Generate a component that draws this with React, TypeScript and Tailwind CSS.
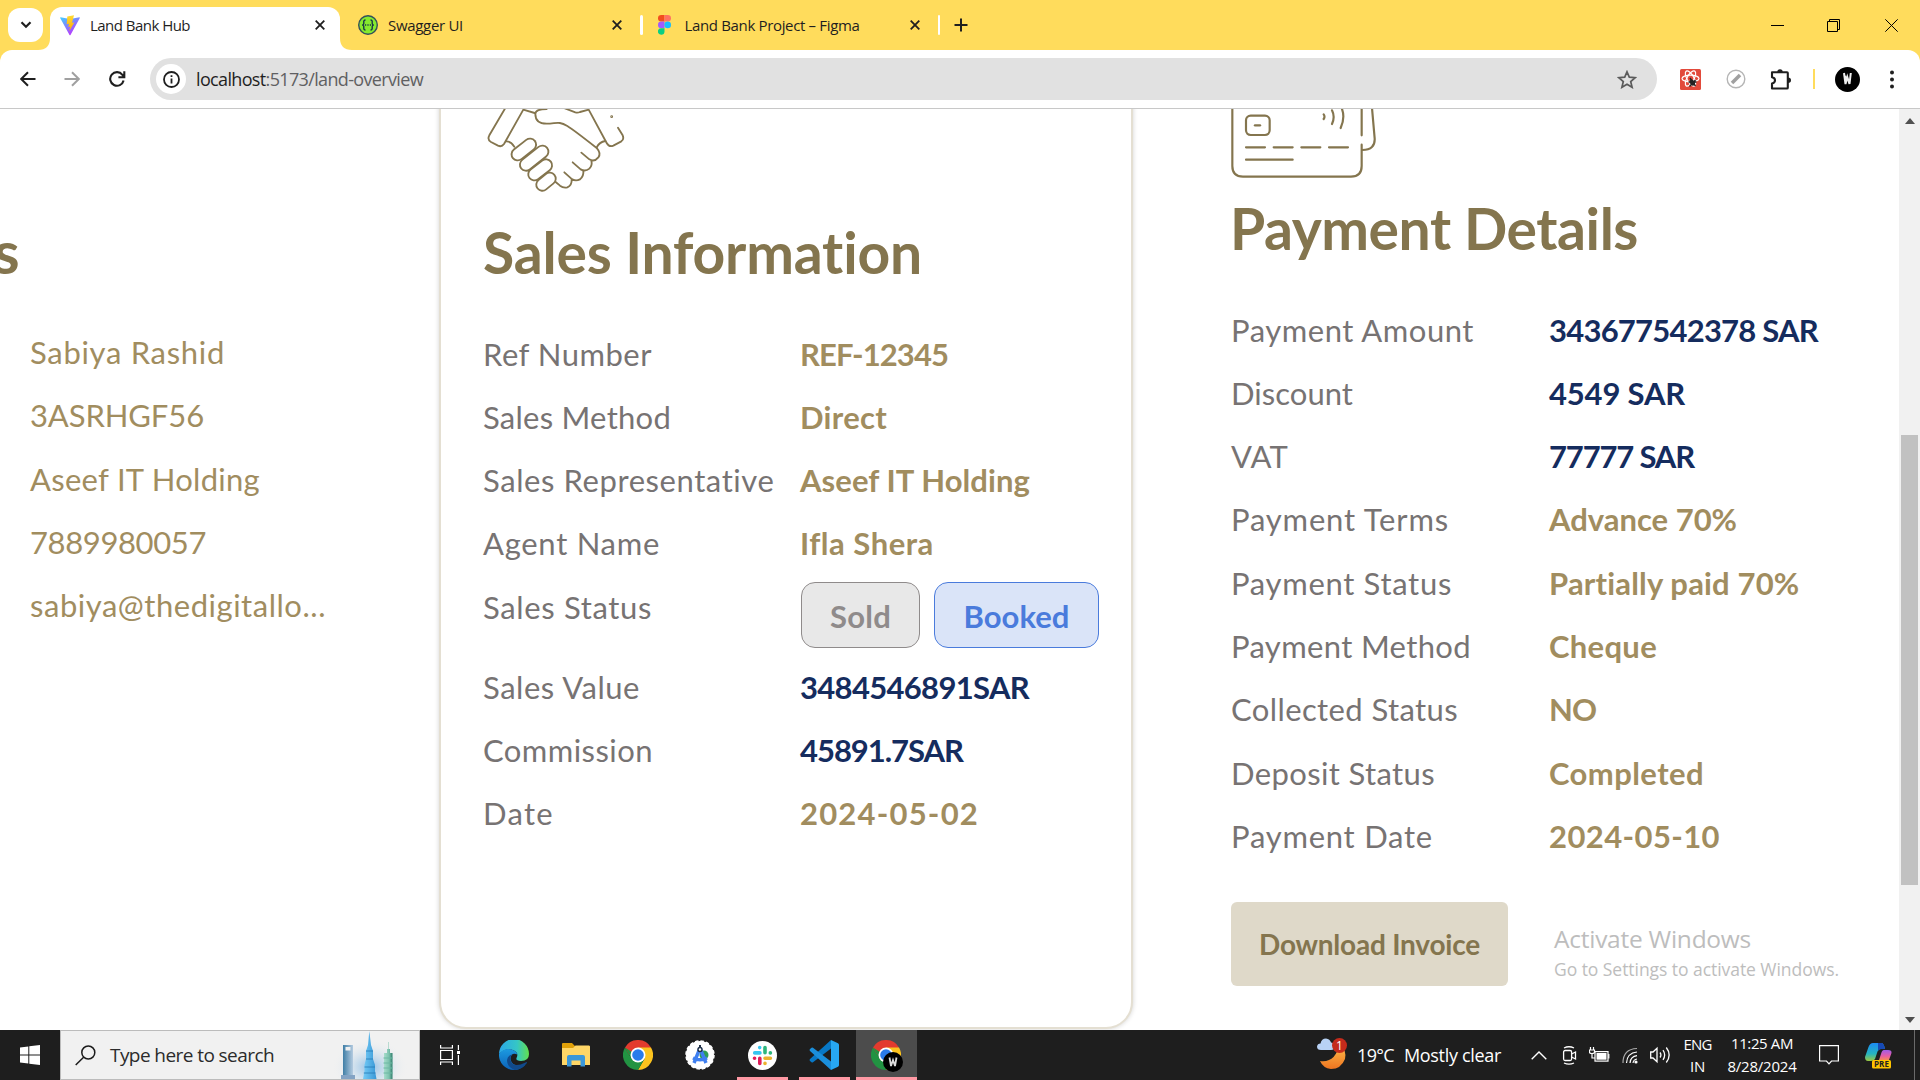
import { useLayoutEffect, useRef } from "react";
import type { ReactNode } from "react";

/* Text tracked so that it fills a given width. */
function Fit({ w, className = "", children }: { w: number; className?: string; children: ReactNode }) {
  const ref = useRef<HTMLSpanElement>(null);
  useLayoutEffect(() => {
    const el = ref.current;
    if (!el) return;
    el.style.letterSpacing = "0px";
    const n = (el.textContent || "x").length;
    const natural = el.getBoundingClientRect().width;
    el.style.letterSpacing = `${(w - natural) / n}px`;
  }, [w]);
  return (
    <span ref={ref} className={"inline-block whitespace-pre " + className}>
      {children}
    </span>
  );
}

const GOLD = "text-[#a18d5f]";
const NAVY = "text-[#152c5e]";

type Cell = [string, number];
type Row = { label: Cell; value: Cell; navy?: boolean };

const owner: Cell[] = [
  ["Sabiya Rashid", 195],
  ["3ASRHGF56", 174],
  ["Aseef IT Holding", 230],
  ["7889980057", 176],
  ["sabiya@thedigitallo...", 296],
];

const salesTop: Row[] = [
  { label: ["Ref Number", 169], value: ["REF-12345", 148] },
  { label: ["Sales Method", 188], value: ["Direct", 87] },
  { label: ["Sales Representative", 292], value: ["Aseef IT Holding", 230] },
  { label: ["Agent Name", 177], value: ["Ifla Shera", 134] },
];
const salesBottom: Row[] = [
  { label: ["Sales Value", 157], value: ["3484546891SAR", 229], navy: true },
  { label: ["Commission", 170], value: ["45891.7SAR", 163], navy: true },
  { label: ["Date", 71], value: ["2024-05-02", 179] },
];
const payment: Row[] = [
  { label: ["Payment Amount", 243], value: ["343677542378 SAR", 269], navy: true },
  { label: ["Discount", 122], value: ["4549 SAR", 136], navy: true },
  { label: ["VAT", 57], value: ["77777 SAR", 145], navy: true },
  { label: ["Payment Terms", 218], value: ["Advance 70%", 188] },
  { label: ["Payment Status", 221], value: ["Partially paid 70%", 251] },
  { label: ["Payment Method", 240], value: ["Cheque", 108] },
  { label: ["Collected Status", 227], value: ["NO", 47] },
  { label: ["Deposit Status", 204], value: ["Completed", 155] },
  { label: ["Payment Date", 202], value: ["2024-05-10", 171] },
];

function InfoRow({ row, labelWidth }: { row: Row; labelWidth: string }) {
  return (
    <div className="flex h-[63.3px] items-start">
      <div className={labelWidth + " shrink-0 text-[#777373]"}>
        <Fit w={row.label[1]}>{row.label[0]}</Fit>
      </div>
      <div className={"font-bold " + (row.navy ? NAVY : GOLD)}>
        <Fit w={row.value[1]}>{row.value[0]}</Fit>
      </div>
    </div>
  );
}

function Handshake() {
  const fingers = ["M263 163 L300 134", "M288 194 L337 155", "M313 223 L348 196", "M337 254 L359 236"];
  return (
    <svg width="150" height="90" viewBox="150 27 450 270" fill="none" stroke="#84754e" strokeWidth="5.5" strokeLinecap="round" strokeLinejoin="round">
      <path d="M226 24 L178 106 Q171 119 183 126 L204 137 Q215 142 222 132 L280 29 L314 39" />
      <path d="M350 27 Q316 27 316 42 Q316 71 350 71 C380 71 385 62 412 78 Q430 89 500 144" />
      <path d="M402 24 L436 37 Q443 39 450 36 L476 29 L530 129 Q537 142 550 137 L574 124 Q583 118 578 106 L564 83" />
      <path d="M228 124 Q242 123 253 140 M500 142 Q508 126 526 123" />
      <circle cx="545" cy="50" r="1.5" />
      {fingers.map((d) => (
        <g key={d}>
          <path d={d} strokeWidth="42" />
          <path d={d} stroke="white" strokeWidth="31" />
        </g>
      ))}
      <path d="M501 145 Q514 160 505 172 Q493 187 478 178 L454 158 M484 182 Q488 196 478 206 Q466 216 452 208 L428 187 M460 211 Q462 228 450 238 Q436 245 424 236 L403 217 M425 238 Q426 256 412 262 Q400 265 390 257 L377 246" />
    </svg>
  );
}

function Cards() {
  return (
    <svg width="150" height="70" viewBox="90 27 450 210" fill="none" stroke="#84754e" strokeWidth="6.5" strokeLinecap="round">
      <path d="M97 20 V198 Q97 230 129 230 H453 Q485 230 485 198 V134 M485 106 V20" />
      <path d="M516 24 L524 115 Q526 150 487 150" />
      <rect x="138" y="47" width="71" height="58" rx="14" />
      <path d="M165 76 H180" strokeWidth="7" />
      <path d="M138 142 H195 M221 142 H278 M304 142 H361 M387 142 H444 M138 179 H278" />
      <path d="M371 43 Q376 50 371 57 M396 31 Q406 51 396 72 M424 22 Q437 51 422 84" />
    </svg>
  );
}

function Close() {
  return (
    <svg width="10" height="10" viewBox="0 0 10 10" stroke="#1f1f1f" strokeWidth="1.8">
      <path d="M.7 .7 L9.3 9.3 M9.3 .7 L.7 9.3" />
    </svg>
  );
}

const TAB_TEXT = "text-[15px] leading-5 text-[#1f1f1f]";

function TabStrip() {
  return (
    <div className="flex h-[50px] items-center bg-[#ffdc5c]">
      <div className="ml-2 flex h-[34px] w-[35px] items-center justify-center rounded-[12px] bg-white">
        <svg width="12" height="8" viewBox="0 0 12 8" fill="none" stroke="#1f1f1f" strokeWidth="2.2">
          <path d="M1.5 1.2 L6 5.7 L10.5 1.2" />
        </svg>
      </div>
      <div className="relative ml-[7px] mt-[7px] flex h-[43px] w-[290px] items-center rounded-t-[12px] bg-white pb-[7px] pl-2.5">
        <svg className="absolute bottom-0 -left-3" width="12" height="12" viewBox="0 0 12 12" fill="white">
          <path d="M12 0 V12 H0 Q12 12 12 0" />
        </svg>
        <svg className="absolute -right-3 bottom-0" width="12" height="12" viewBox="0 0 12 12" fill="white">
          <path d="M0 0 V12 H12 Q0 12 0 0" />
        </svg>
        <svg width="20" height="21" viewBox="0 0 20 21">
          <defs>
            <linearGradient id="vp" x1="0" y1="0" x2="0.6" y2="1">
              <stop offset="0" stopColor="#41d1ff" />
              <stop offset="1" stopColor="#bd34fe" />
            </linearGradient>
            <linearGradient id="vy" x1="0" y1="0" x2="0" y2="1">
              <stop offset="0" stopColor="#ffdc35" />
              <stop offset="1" stopColor="#ffa800" />
            </linearGradient>
          </defs>
          <path d="M.5 2.3 L10 4 L19.5 2.3 Q20 2.5 19.7 3.2 L10.5 20 Q10 20.7 9.5 20 L.3 3.2 Q0 2.5 .5 2.3" fill="url(#vp)" />
          <path d="M14 .2 L7.3 1.5 L6.7 9.3 L9 8.8 L8.3 12 L10.2 11.5 L9.2 16.3 L14.3 7.4 L12 7.8 Z" fill="url(#vy)" />
        </svg>
        <Fit w={100} className={"ml-2.5 " + TAB_TEXT}>Land Bank Hub</Fit>
        <div className="ml-auto mr-[15px]"><Close /></div>
      </div>
      <div className="flex w-[282px] items-center pl-[18px]">
        <svg width="20" height="20" viewBox="0 0 20 20">
          <circle cx="10" cy="10" r="9.3" fill="#85ea2d" stroke="#33505a" strokeWidth="1.4" />
          <path d="M7.5 5 Q5.5 5 5.8 7.5 Q6 10 4.2 10 Q6 10 5.8 12.5 Q5.5 15 7.5 15 M12.5 5 Q14.5 5 14.2 7.5 Q14 10 15.8 10 Q14 10 14.2 12.5 Q14.5 15 12.5 15" fill="none" stroke="#173647" strokeWidth="1.4" />
          <path d="M7 10 H8.2 M9.4 10 H10.6 M11.8 10 H13" stroke="#173647" strokeWidth="1.3" />
        </svg>
        <Fit w={75} className={"ml-2.5 " + TAB_TEXT}>Swagger UI</Fit>
      </div>
      <div className="-ml-2.5"><Close /></div>
      <div className="ml-[18px] h-5 w-[2.5px] rounded bg-white" />
      <svg className="ml-[15px]" width="13" height="20" viewBox="0 0 13 20">
        <path d="M6.5 0 H3.3 A3.3 3.3 0 0 0 3.3 6.6 H6.5Z" fill="#f24e1e" />
        <path d="M6.5 0 H9.7 A3.3 3.3 0 0 1 9.7 6.6 H6.5Z" fill="#ff7262" />
        <path d="M6.5 6.6 H3.3 A3.3 3.3 0 0 0 3.3 13.2 H6.5Z" fill="#a259ff" />
        <circle cx="9.7" cy="9.9" r="3.3" fill="#1abcfe" />
        <path d="M6.5 13.2 H3.3 A3.3 3.3 0 1 0 6.5 16.6Z" fill="#0acf83" />
      </svg>
      <Fit w={175} className={"ml-3.5 " + TAB_TEXT}>Land Bank Project – Figma</Fit>
      <div className="ml-[50px]"><Close /></div>
      <div className="ml-[18px] h-5 w-[2.5px] rounded bg-white" />
      <svg className="ml-[14px]" width="14" height="14" viewBox="0 0 14 14" stroke="#1f1f1f" strokeWidth="2">
        <path d="M7 .5 V13.5 M.5 7 H13.5" />
      </svg>
      <div className="ml-auto mr-[22px] flex items-center">
        <svg width="13" height="13" viewBox="0 0 13 13" stroke="#000"><path d="M0 6.5 H13" /></svg>
        <svg className="ml-[43px]" width="13" height="13" viewBox="0 0 13 13" fill="none" stroke="#000">
          <path d="M.5 2.5 H10.5 V12.5 H.5Z M2.5 2.5 V.5 H12.5 V10.5 H10.5" />
        </svg>
        <svg className="ml-[45px]" width="13" height="13" viewBox="0 0 13 13" stroke="#000"><path d="M.3 .3 L12.7 12.7 M12.7 .3 L.3 12.7" /></svg>
      </div>
    </div>
  );
}

function Toolbar() {
  return (
    <div className="bg-[#ffdc5c]">
      <div className="flex h-[59px] items-center rounded-t-[12px] border-b border-[#c8c8c8] bg-white">
        <svg className="ml-5" width="16" height="16" viewBox="0 0 16 16" fill="none" stroke="#1f1f1f" strokeWidth="2">
          <path d="M15.5 8 H1.5 M8 1.2 L1.2 8 L8 14.8" />
        </svg>
        <svg className="ml-7" width="16" height="16" viewBox="0 0 16 16" fill="none" stroke="#a0a0a0" strokeWidth="2">
          <path d="M.5 8 H14.5 M8 1.2 L14.8 8 L8 14.8" />
        </svg>
        <svg className="ml-[29px]" width="17" height="16" viewBox="0 0 17 16" fill="none" stroke="#1f1f1f" strokeWidth="2.1">
          <path d="M14.6 9.5 A6.8 6.8 0 1 1 13.4 3.8 L15 5.6 M15.3 .3 V6.2 H9.4" />
        </svg>
        <div className="ml-6 flex h-[42px] w-[1507px] items-center rounded-full bg-[#e1e1e1] pl-[6px] pr-[20px]">
          <div className="flex size-[30px] items-center justify-center rounded-full bg-white">
            <svg width="17" height="17" viewBox="0 0 17 17" fill="none" stroke="#1f1f1f" strokeWidth="1.8">
              <circle cx="8.5" cy="8.5" r="7.5" />
              <path d="M8.5 7.5 V12.5 M8.5 4.3 V6.1" />
            </svg>
          </div>
          <Fit w={227} className="ml-[10px] text-[18px] leading-6 text-[#5f6062]">
            <span className="text-[#1f1f1f]">localhost</span>:5173/land-overview
          </Fit>
          <svg className="ml-auto" width="20" height="19" viewBox="0 0 20 19" fill="none" stroke="#5b5b5b" strokeWidth="1.7">
            <path d="M10 1.8 L12.3 7.2 L18.2 7.7 L13.7 11.5 L15.1 17.3 L10 14.2 L4.9 17.3 L6.3 11.5 L1.8 7.7 L7.7 7.2Z" />
          </svg>
        </div>
        <svg className="ml-[23px]" width="21" height="21" viewBox="0 0 21 21" fill="none" stroke="#fff" strokeWidth="1.2">
          <rect width="21" height="21" rx="1.5" fill="#e24a3b" stroke="none" />
          <ellipse cx="10.5" cy="9.5" rx="8.5" ry="3.4" />
          <ellipse cx="10.5" cy="9.5" rx="8.5" ry="3.4" transform="rotate(60 10.5 9.5)" />
          <ellipse cx="10.5" cy="9.5" rx="8.5" ry="3.4" transform="rotate(120 10.5 9.5)" />
          <path d="M10 9 L15.5 17 M8.5 13 H16.5 M9.5 17.5 L15.5 11" stroke="#222" strokeWidth="1.4" />
          <ellipse cx="12.3" cy="13.6" rx="2.3" ry="3.2" fill="#222" stroke="none" transform="rotate(-30 12.3 13.6)" />
        </svg>
        <svg className="ml-[25px]" width="20" height="20" viewBox="0 0 20 20" fill="none">
          <circle cx="10" cy="10" r="8.8" stroke="#b5b5b5" strokeWidth="1.4" />
          <path d="M6 14 L14 6" stroke="#a0a0a0" strokeWidth="3.6" />
        </svg>
        <svg className="ml-[24px]" width="22" height="21" viewBox="0 0 22 21" fill="none" stroke="#1f1f1f" strokeWidth="2.1">
          <path d="M2 3.3 H17 Q17.8 3.3 17.8 4 V18.7 Q17.8 19.5 17 19.5 H2 V14.5 Q5 14 5 11.3 Q5 8.6 2 8.2Z" strokeLinejoin="round" />
          <path d="M7.3 3 Q7.3 .3 10 .3 Q12.7 .3 12.7 3Z M18 8.6 Q21 8.6 21 11.3 Q21 14 18 14Z" fill="#1f1f1f" stroke="none" />
        </svg>
        <div className="ml-[21px] h-5 w-0.5 bg-[#ffdc5c]" />
        <svg className="ml-[20px]" width="25" height="25" viewBox="0 0 25 25">
          <circle cx="12.5" cy="12.5" r="12.5" fill="#000" />
          <path d="M9 6 L10.5 17 L12.3 10 L14.5 17 L15.8 6 M9 8 L12 12" fill="none" stroke="#eee" strokeWidth="2" />
        </svg>
        <svg className="ml-[29px]" width="6" height="19" viewBox="0 0 6 19" fill="#1f1f1f">
          <circle cx="3" cy="2.5" r="2" /><circle cx="3" cy="9.5" r="2" /><circle cx="3" cy="16.5" r="2" />
        </svg>
      </div>
    </div>
  );
}

function Content() {
  return (
    <div className="relative flex h-[921px] overflow-hidden bg-white">
      <div className="flex min-w-0 flex-1 font-['Lato','Liberation_Sans',sans-serif] text-[31px] leading-[40px]">
        <section className="flex w-[439px] shrink-0 flex-col">
          <div className="mt-[108px] flex h-[68px] w-[19.5px] justify-end text-[60px] leading-[68px] font-bold text-[#84754e]">
            <span>s</span>
          </div>
          <div className="mt-[47px] pl-[30px] text-[#a18d5f]">
            {owner.map(([t, w]) => (
              <div key={t} className="h-[63.3px]"><Fit w={w}>{t}</Fit></div>
            ))}
          </div>
        </section>

        <section className="-mt-10 h-[960px] w-[694px] shrink-0 rounded-[27px] border-2 border-[#e4dfd2] bg-white pl-[42px] pt-[38px] shadow-[0_0_5px_rgba(0,0,0,0.18)]">
          <div className="-ml-[3px]"><Handshake /></div>
          <h2 className="mt-[19px] h-[68px] text-[57px] leading-[68px] font-bold text-[#84754e]">
            <Fit w={440}>Sales Information</Fit>
          </h2>
          <div className="mt-[47.6px]">
            {salesTop.map((r) => <InfoRow key={r.label[0]} row={r} labelWidth="w-[317px]" />)}
            <div className="flex h-[79.8px] items-start">
              <div className="w-[318px] shrink-0 text-[#777373]"><Fit w={169}>Sales Status</Fit></div>
              <div className="-mt-[4.6px] flex gap-[14px] font-bold">
                <div className="flex h-[66px] w-[119px] items-center justify-center rounded-[14px] border border-[#8f8b8b] bg-[#e8e8e8] pt-[2px] text-[#8f8b8b]">
                  <Fit w={61}>Sold</Fit>
                </div>
                <div className="flex h-[66px] w-[165px] items-center justify-center rounded-[14px] border border-[#4a7bdc] bg-[#dae4f8] pt-[2px] text-[#4a7bdc]">
                  <Fit w={106}>Booked</Fit>
                </div>
              </div>
            </div>
            {salesBottom.map((r) => <InfoRow key={r.label[0]} row={r} labelWidth="w-[317px]" />)}
          </div>
        </section>

        <section className="ml-[97px] flex w-[669px] shrink-0 flex-col">
          <Cards />
          <h2 className="mt-[15px] h-[68px] text-[57px] leading-[68px] font-bold text-[#84754e]">
            <Fit w={408}>Payment Details</Fit>
          </h2>
          <div className="mt-[47.6px] pl-[1px]">
            {payment.map((r) => <InfoRow key={r.label[0]} row={r} labelWidth="w-[318px]" />)}
          </div>
          <div className="mt-[22.7px] flex items-start pl-[1px]">
            <button className="h-[84px] w-[277px] rounded-[6px] bg-[#dfd9c9] text-[28px] font-bold text-[#84754e]">
              <Fit w={221}>Download Invoice</Fit>
            </button>
            <div className="ml-[46px] mt-[20px] flex flex-col items-start font-['Open_Sans','Noto_Sans',sans-serif] text-[#bdbdbd]">
              <Fit w={197} className="text-[24.5px] leading-[34px]">Activate Windows</Fit>
              <Fit w={285} className="text-[17.5px] leading-[26px]">Go to Settings to activate Windows.</Fit>
            </div>
          </div>
        </section>
      </div>
      <div className="flex w-[21px] shrink-0 flex-col items-center bg-[#f1f1f1]">
        <svg className="mt-[9px]" width="10" height="6" viewBox="0 0 10 6" fill="#505050"><path d="M5 0 L10 6 H0Z" /></svg>
        <div className="mt-[311px] h-[450px] w-[17px] bg-[#c1c1c1]" />
        <svg className="mt-[132px]" width="10" height="6" viewBox="0 0 10 6" fill="#505050"><path d="M5 6 L10 0 H0Z" /></svg>
      </div>
    </div>
  );
}

function Chrome() {
  return (
    <svg width="30" height="30" viewBox="0 0 30 30">
      <path d="M15 15 L2 7.5 A15 15 0 0 1 28 7.5 Z" fill="#e33b2e" />
      <path d="M15 7.5 H28 A15 15 0 0 1 15 30 L21.5 18.8 Z" fill="#fcc31e" />
      <path d="M2 7.5 A15 15 0 0 0 15 30 L21.5 18.8 L8.5 18.8 Z" fill="#229342" />
      <path d="M2 7.5 H15 V15 H6.3Z" fill="#e33b2e" />
      <path d="M2 7.5 L8.5 18.8 L9 12Z" fill="#229342" />
      <circle cx="15" cy="15" r="7.5" fill="#fff" />
      <circle cx="15" cy="15" r="5.8" fill="#2a7bea" />
    </svg>
  );
}

function Taskbar() {
  return (
    <div className="flex h-[50px] items-center bg-[#1e1e1e] text-white">
      <div className="flex w-[60px] justify-center">
        <svg width="20" height="20" viewBox="0 0 20 20" fill="#fff">
          <path d="M0 2.6 L8.3 1.4 V9.5 H0Z M9.3 1.2 L20 0 V9.5 H9.3Z M0 10.5 H8.3 V18.6 L0 17.4Z M9.3 10.5 H20 V20 L9.3 18.8Z" />
        </svg>
      </div>
      <div className="flex h-[50px] w-[360px] items-center border border-[#bcbcbc] bg-[#f1f1f1] pl-3.5">
        <svg width="21" height="21" viewBox="0 0 21 21" fill="none" stroke="#1b1b1b" strokeWidth="1.5">
          <circle cx="13.3" cy="7.5" r="6.5" />
          <path d="M8.6 12.2 L.7 20" />
        </svg>
        <Fit w={164} className="ml-[14px] text-[19px] leading-6 text-[#2b2b2b]">Type here to search</Fit>
        <svg className="ml-auto mr-[12px]" width="75" height="48" viewBox="0 0 75 48">
          <defs>
            <radialGradient id="glow">
              <stop offset="0" stopColor="#8fbfe6" />
              <stop offset="1" stopColor="#f1f1f1" stopOpacity="0" />
            </radialGradient>
            <linearGradient id="b1"><stop offset="0" stopColor="#3f7ea6" /><stop offset="1" stopColor="#b4cbe0" /></linearGradient>
            <linearGradient id="b2"><stop offset="0" stopColor="#74cbf6" /><stop offset="1" stopColor="#3797d6" /></linearGradient>
            <linearGradient id="b3"><stop offset="0" stopColor="#a5dccb" /><stop offset=".6" stopColor="#7cc2ae" /><stop offset="1" stopColor="#2f7d6b" /></linearGradient>
          </defs>
          <ellipse cx="38" cy="36" rx="38" ry="28" fill="url(#glow)" />
          <path d="M11 14 H21 V44 H11Z M13.5 16 V19.5 H18.5 V16Z" fill="url(#b1)" fillRule="evenodd" />
          <rect x="9" y="44" width="14" height="4" fill="#83a3c4" />
          <path d="M37.3 0 L39 14 L41 20 V28 L43 34 V40 L44.5 48 H31 L32.5 40 V34 L34 28 V20 L36 14Z" fill="url(#b2)" />
          <path d="M34 20 H41 M34 28 H41 M32.5 36 H43 M31.8 42 H43.5" stroke="#2578b5" strokeWidth=".8" />
          <path d="M56.5 11 V18 H58 V22 H60.5 V48 H52 V22 H55 V18 H56 V11Z" fill="url(#b3)" />
          <path d="M51.5 27 H61 M51.5 32 H61 M51.5 37 H61 M51.5 42 H61" stroke="#6db8a4" strokeWidth="1" />
        </svg>
      </div>
      <svg className="ml-5" width="20" height="20" viewBox="0 0 20 20" fill="none" stroke="#fff" strokeWidth="1.2">
        <path d="M.6 5.5 H12.4 V14.5 H.6Z M.6 0 V3 H12.4 V0 M.6 20 V17 H12.4 V20 M18.4 0 V5 M18.4 10 V20" />
        <rect x="17" y="6" width="3" height="3" fill="#fff" stroke="none" />
      </svg>
      <svg className="ml-[39px]" width="30" height="30" viewBox="0 0 30 30">
        <defs>
          <linearGradient id="e1"><stop offset="0" stopColor="#2aa7e8" /><stop offset=".6" stopColor="#35c6c6" /><stop offset="1" stopColor="#62e04e" /></linearGradient>
          <linearGradient id="e2" x1="0" y1="0" x2="0" y2="1"><stop offset="0" stopColor="#1c9ae0" /><stop offset="1" stopColor="#0c62b9" /></linearGradient>
        </defs>
        <path d="M0 14 A15 15 0 0 1 30 14 Q30 21 22 21 Q16.5 21 17.5 18 Q20 13 15 10.5 Q7 7 0 14" fill="url(#e1)" />
        <path d="M0 14 Q6 6.5 15 10.5 Q18 12 18.3 14.5 Q12 12 11.5 19 Q13 28 26 25 Q21 30 15 30 A15 15 0 0 1 0 14" fill="url(#e2)" />
        <path d="M13 14.5 Q10.5 17 12 21.5 Q15 28 26.5 22.5 Q29 21 27.5 23.5 Q23 30 15.5 30 Q8 27 8 20 Q8.5 15.5 13 14.5" fill="#114a8b" />
      </svg>
      <svg className="ml-[33px]" width="28" height="24" viewBox="0 0 28 24">
        <path d="M0 1 Q0 0 1 0 H10 L13 3 H27 Q28 3 28 4 V22 H0Z" fill="#e0a008" />
        <path d="M0 5 H11 L13.5 2.5 H27 Q28 2.5 28 4 V22 H0Z" fill="#ffd666" />
        <path d="M5 23.5 V14 Q5 12 7 12 H21 Q23 12 23 14 V23.5 H18.5 V17.5 H9.5 V23.5Z" fill="#3b97d9" />
      </svg>
      <div className="ml-[33px]"><Chrome /></div>
      <svg className="ml-8" width="30" height="30" viewBox="0 0 30 30">
        <circle cx="15" cy="15" r="14" fill="#fff" stroke="#fff" strokeWidth="1.5" strokeDasharray="3.5 2" />
        <circle cx="19" cy="15" r="4.5" fill="#2f9e54" />
        <path d="M15 8 L9 23 M15 8 L21 23 M8 18 Q15 21.5 22 18" fill="none" stroke="#3f7ff0" strokeWidth="3.4" />
        <circle cx="15" cy="9.5" r="2" fill="#fff" stroke="#1f2f45" strokeWidth="1.4" />
        <path d="M15 5 V8" stroke="#1f2f45" strokeWidth="2" />
      </svg>
      <div className="relative ml-[22px] flex h-[50px] w-[51px] items-center justify-center">
        <svg className="-ml-px" width="29" height="29" viewBox="0 0 29 29" strokeWidth="3.6" strokeLinecap="round">
          <circle cx="14.5" cy="14.5" r="14.5" fill="#fff" />
          <path d="M6.7 11.9 H11.9 M11.7 6.5 V6.6" stroke="#36c5f0" />
          <path d="M17 6.5 V11.7 M22.3 11.9 H22.4" stroke="#2eb67d" />
          <path d="M17 17.2 H22.4 M17 22.3 V22.4" stroke="#ecb22e" />
          <path d="M11.8 17.3 V22.4 M6.5 17.2 H6.6" stroke="#e01e5a" />
        </svg>
        <div className="absolute inset-x-0 bottom-0 h-[3px] bg-[#ff99a4]" />
      </div>
      <div className="relative ml-[11px] flex h-[50px] w-[51px] items-center justify-center">
        <svg className="-ml-px" width="30" height="30" viewBox="0 0 30 30">
          <path d="M22 0 L1 19 Q0 20 1 21 L2.5 22.3 Q3.3 22.8 4 22.2 L22 8.5Z" fill="#0878c6" />
          <path d="M22 30 L1 11 Q0 10 1 9 L2.5 7.7 Q3.3 7.2 4 7.8 L22 21.5Z" fill="#1b8fdc" />
          <path d="M22 0 L29 3.2 Q30 3.7 30 5 V25 Q30 26.3 29 26.8 L22 30Z" fill="#27a7f3" />
        </svg>
        <div className="absolute inset-x-0 bottom-0 h-[3px] bg-[#ff99a4]" />
      </div>
      <div className="relative ml-[6px] flex h-[50px] w-[61px] items-center justify-center bg-[#4c4c4c]">
        <div className="-ml-px"><Chrome /></div>
        <svg className="absolute top-[22px] left-[27px]" width="20" height="20" viewBox="0 0 20 20">
          <circle cx="10" cy="10" r="10" fill="#000" />
          <path d="M6.5 5.5 L8 14 L10 8 L12 14 L13.5 5.5" fill="none" stroke="#ddd" strokeWidth="1.8" />
        </svg>
        <div className="absolute inset-x-0 bottom-0 h-[3px] bg-[#ff99a4]" />
      </div>

      <svg className="ml-[399px] -mt-1" width="32" height="34" viewBox="0 0 32 34">
        <defs><linearGradient id="mn" x1="0" y1="0" x2="0" y2="1"><stop offset="0" stopColor="#ffc14d" /><stop offset="1" stopColor="#ee7420" /></linearGradient></defs>
        <path d="M23 8 Q31 14 29 23 Q25 33 15 33 Q7 32 4 25 Q20 27 23 8" fill="url(#mn)" />
        <path d="M5 14 Q1 14 1 10.5 Q1.5 7.5 4.5 7.5 Q5.5 2.5 10 2.5 Q14 3 15 6.5 Q19 7 19 10.5 Q18.5 14 15 14Z" fill="#b8d2f5" />
        <circle cx="23.5" cy="9.5" r="7.5" fill="#c42b1c" />
        <text x="23.5" y="13.8" fontSize="12" fill="#fff" textAnchor="middle" fontFamily="Open Sans">1</text>
      </svg>
      <Fit w={37} className="ml-[9px] text-[18px] leading-6">19°C</Fit>
      <Fit w={97} className="ml-[10px] text-[18px] leading-6">Mostly clear</Fit>
      <svg className="ml-[30px]" width="16" height="9" viewBox="0 0 16 9" fill="none" stroke="#fff" strokeWidth="1.4"><path d="M.7 8.3 L8 1 L15.3 8.3" /></svg>
      <svg className="ml-[15px]" width="15" height="19" viewBox="0 0 15 19" fill="none" stroke="#fff" strokeWidth="1.3">
        <rect x="1.6" y="4.5" width="8" height="10" rx="1.5" />
        <path d="M9.6 8 L13.5 6 V13 L9.6 11 M2 2 Q7 -.5 12 2 M2 17 Q7 19.3 12 17" />
      </svg>
      <svg className="ml-[12px]" width="21" height="16" viewBox="0 0 21 16" fill="none" stroke="#fff" strokeWidth="1.2">
        <rect x="6" y="4.6" width="13" height="9.5" />
        <rect x="7.5" y="6" width="10" height="6.7" fill="#fff" stroke="none" />
        <path d="M19.8 7 V11.5 M1.5 0 V3 M4.5 0 V3 M.5 3 H5.5 V5 Q5.5 6.5 3 6.5 Q.5 6.5 .5 5Z M3 6.5 V11 H6" />
      </svg>
      <svg className="ml-[12px]" width="16" height="17" viewBox="0 0 16 17" fill="none" stroke="#fff" strokeWidth="1.2">
        <path d="M1 16 Q1 2 15 1.5" stroke="#aaa" />
        <path d="M4.5 16 Q5 6 15 5 M8 16 Q8.5 9.5 15 8.7 M11 16 Q11.5 12.5 15 12" />
        <circle cx="14" cy="15" r="1.6" fill="#fff" stroke="none" />
      </svg>
      <svg className="ml-[12px]" width="21" height="18" viewBox="0 0 21 18" fill="none" stroke="#fff" strokeWidth="1.3">
        <path d="M.7 6 H3 L7 2.2 V15.8 L3 12 H.7Z M10 6.5 Q11.8 9 10 11.5 M13 4.2 Q16.3 9 13 13.8 M16.3 1.5 Q22 9 16.3 16.5" />
      </svg>
      <div className="ml-[12px] flex w-[29px] flex-col items-center text-[15px] leading-[22px]">
        <Fit w={28}>ENG</Fit>
        <Fit w={15}>IN</Fit>
      </div>
      <div className="ml-[15px] flex w-[70px] flex-col items-center text-[15px] leading-[23px]">
        <Fit w={62}>11:25 AM</Fit>
        <Fit w={69}>8/28/2024</Fit>
      </div>
      <svg className="ml-[22px]" width="20" height="20" viewBox="0 0 20 20" fill="none" stroke="#fff" strokeWidth="1.2">
        <path d="M.6 .6 H19.4 V16 H12.5 L10 18.8 L7.5 16 H.6Z" />
      </svg>
      <svg className="ml-[26px]" width="27" height="28" viewBox="0 0 27 28">
        <defs>
          <linearGradient id="c1" x1="0" y1="0" x2="0" y2="1"><stop offset="0" stopColor="#1c8cf5" /><stop offset=".6" stopColor="#25b4c0" /><stop offset="1" stopColor="#9cc83f" /></linearGradient>
          <linearGradient id="c2" x1="0" y1="0" x2="0" y2="1"><stop offset="0" stopColor="#a05de8" /><stop offset=".6" stopColor="#e85da5" /><stop offset="1" stopColor="#f78a55" /></linearGradient>
        </defs>
        <path d="M8 2 H17 Q19 3 20 8 H16 Q13 8 12 12 L10 18 Q9 20 6 20 H3 Q0 20 0 16 L3.5 6 Q5 2 8 2" fill="url(#c1)" />
        <path d="M13 2 H17 Q19 3 20 8 H16 Q14 8 13 10Z" fill="#1749b5" />
        <path d="M19 9 H23 Q27 9 26.5 12 L24 19 H14 L16 13 Q17 9 19 9" fill="url(#c2)" />
        <rect x="7" y="19" width="19" height="8.5" rx="1.5" fill="#ffc400" />
        <text x="16.5" y="26.2" fontSize="8" fontWeight="700" fill="#222" textAnchor="middle" fontFamily="Open Sans">PRE</text>
      </svg>
      <div className="ml-auto mr-[5px] h-[50px] w-px bg-[#6a6a6a]" />
    </div>
  );
}

export default function App() {
  return (
    <div className="flex h-[1080px] w-[1920px] flex-col overflow-hidden bg-white font-['Open_Sans','Noto_Sans',sans-serif]">
      <TabStrip />
      <Toolbar />
      <Content />
      <Taskbar />
    </div>
  );
}
